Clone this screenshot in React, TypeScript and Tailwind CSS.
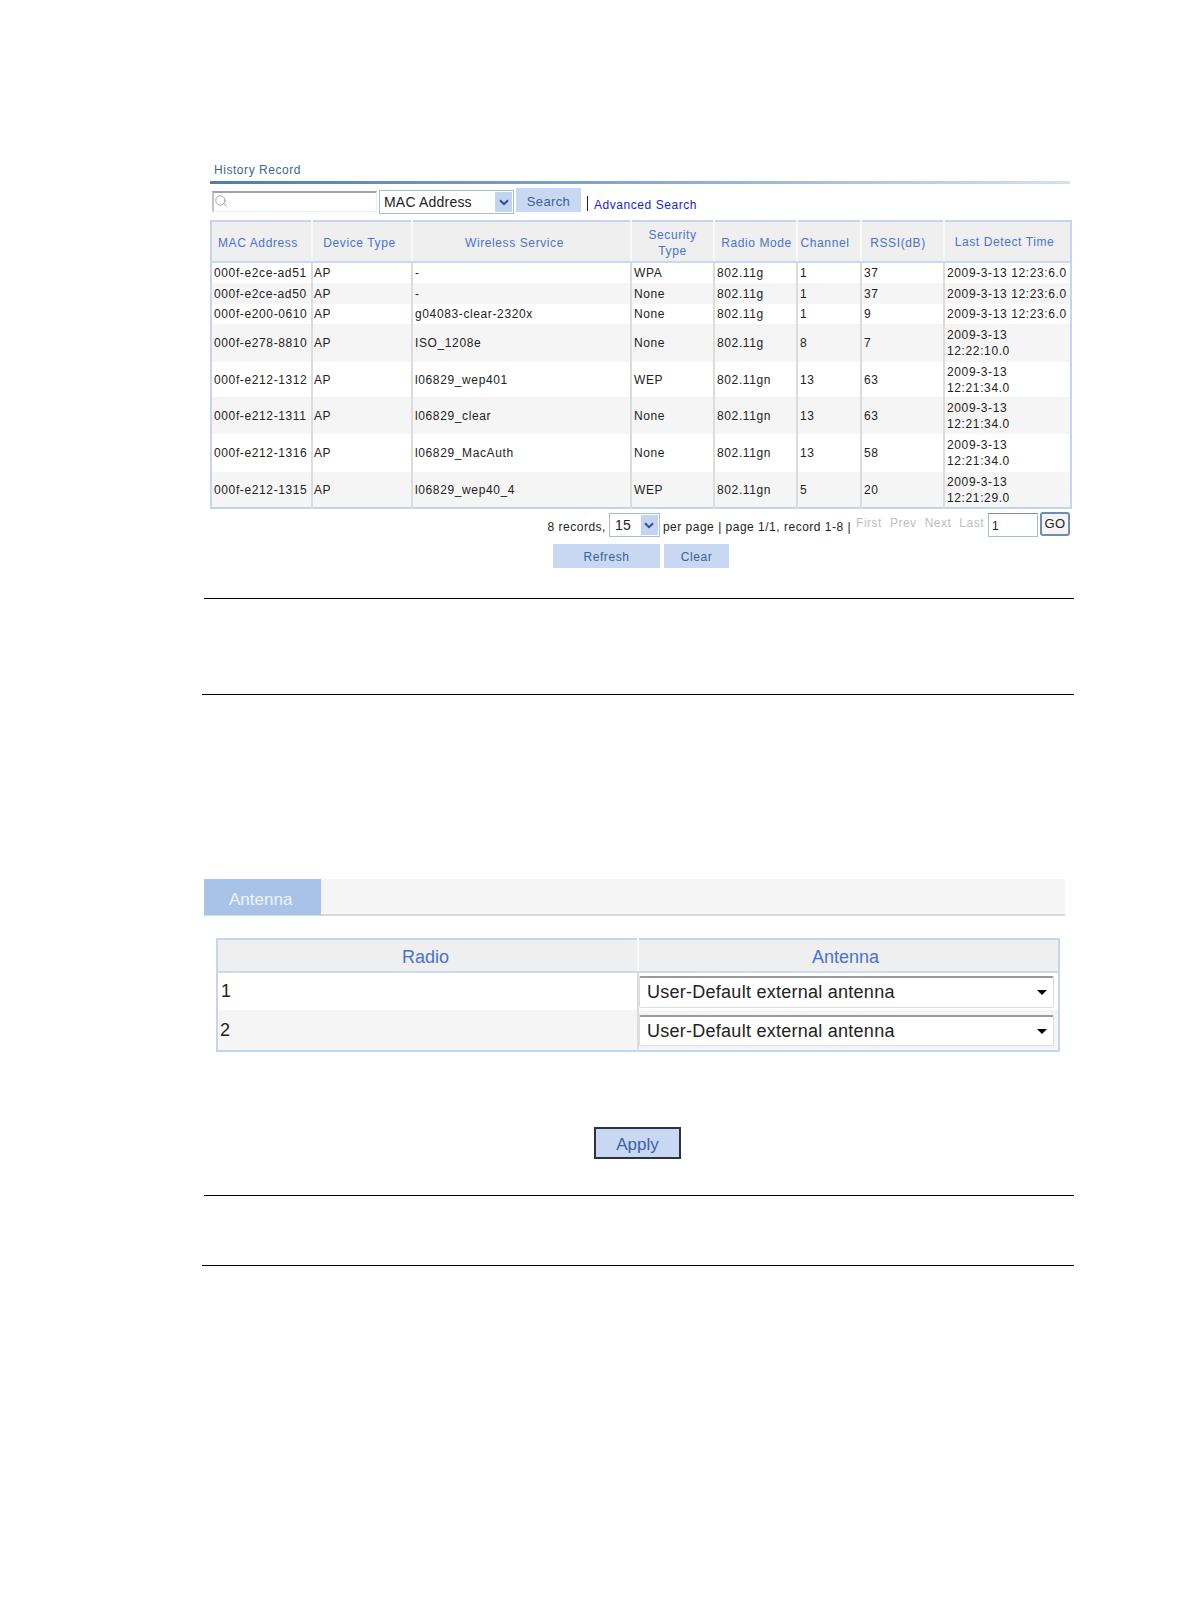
import { Search } from "lucide-react";

const font = "[font-family:'Liberation_Sans',Arial,sans-serif]";

const headers = [
  { label: "MAC Address", cls: "pr-[7px] pt-[2px]" },
  { label: "Device Type", cls: "pr-[5px] pt-[2px]" },
  { label: "Wireless Service", cls: "pr-[14px] pt-[2px]" },
  { label: "Security Type", cls: "pl-0 pt-[2px]" },
  { label: "Radio Mode", cls: "pl-[2px] pt-[2px]" },
  { label: "Channel", cls: "pr-[8px] pt-[2px]" },
  { label: "RSSI(dB)", cls: "pr-[9px] pt-[2px]" },
  { label: "Last Detect Time", cls: "pr-[6px] pt-[1px]" },
];

const rows = [
  { h: "h-[21px]", c: ["000f-e2ce-ad51", "AP", "-", "WPA", "802.11g", "1", "37", "2009-3-13 12:23:6.0"] },
  { h: "h-[21px]", c: ["000f-e2ce-ad50", "AP", "-", "None", "802.11g", "1", "37", "2009-3-13 12:23:6.0"] },
  { h: "h-[20px]", c: ["000f-e200-0610", "AP", "g04083-clear-2320x", "None", "802.11g", "1", "9", "2009-3-13 12:23:6.0"] },
  { h: "h-[38px]", c: ["000f-e278-8810", "AP", "ISO_1208e", "None", "802.11g", "8", "7", "2009-3-13 12:22:10.0"] },
  { h: "h-[35px]", c: ["000f-e212-1312", "AP", "l06829_wep401", "WEP", "802.11gn", "13", "63", "2009-3-13 12:21:34.0"] },
  { h: "h-[37px]", c: ["000f-e212-1311", "AP", "l06829_clear", "None", "802.11gn", "13", "63", "2009-3-13 12:21:34.0"] },
  { h: "h-[38px]", c: ["000f-e212-1316", "AP", "l06829_MacAuth", "None", "802.11gn", "13", "58", "2009-3-13 12:21:34.0"] },
  { h: "h-[36px]", c: ["000f-e212-1315", "AP", "l06829_wep40_4", "WEP", "802.11gn", "5", "20", "2009-3-13 12:21:29.0"] },
];

const widths = ["w-[101px]", "w-[100px]", "w-[219px]", "w-[83px]", "w-[83px]", "w-[64px]", "w-[83px]", "w-[127px]"];

function Chevron() {
  return (
    <svg width="10" height="7" viewBox="0 0 10 7" aria-hidden="true">
      <path d="M1 1.2 5 5.2 9 1.2" fill="none" stroke="#31508f" strokeWidth="2" />
    </svg>
  );
}

function MiniSelect({ text, cls, pl }: { text: string; cls: string; pl: string }) {
  return (
    <div className={`${cls} h-[24px] border border-[#a9bcd6] bg-white flex items-stretch justify-between p-[1px]`}>
      <span className={`${pl} text-[14px] leading-[20px] tracking-[0.2px] text-[#222]`}>{text}</span>
      <span className="w-[17px] bg-[#c3d4f2] flex items-center justify-center">
        <Chevron />
      </span>
    </div>
  );
}

function AntennaSelect({ cls }: { cls: string }) {
  return (
    <div className={`${cls} w-[415px] border border-[#dedede] border-t-2 border-t-[#9a9a9a] rounded-[2px] bg-white flex items-center justify-between pl-[7px] pr-[6px]`}>
      <span className="text-[18px] tracking-[0.26px] text-[#222]">User-Default external antenna</span>
      <span className="w-0 h-0 border-x-[5px] border-x-transparent border-t-[5px] border-t-black" />
    </div>
  );
}

function Rule({ cls }: { cls: string }) {
  return <div className={`${cls} h-px bg-black`} />;
}

export default function App() {
  return (
    <div className={`${font} w-[1190px] h-[1616px] bg-white pt-[162px] overflow-hidden`}>
      <div className="ml-[210px] w-[860px]">
        <h2 className="h-[18px] pl-[4px] text-[12px] leading-[16px] tracking-[0.55px] font-normal text-[#3f6593]">History Record</h2>
        <div className="mt-[1px] h-[3px] bg-gradient-to-r from-[#4f7fa8] via-[#88a8cf] to-[#d5e1ee]" />

        <div className="mt-[4px] h-[26px] flex items-start">
          <div className="ml-[2px] mt-[3px] w-[165px] h-[21px] border-t-2 border-l-2 border-t-[#a3a3a3] border-l-[#c2c2c2] border-r border-b border-r-[#eee] border-b-[#eee] flex items-center">
            <Search size={14} strokeWidth={1.5} className="text-[#9a9a9a] -mt-[2px]" />
          </div>
          <MiniSelect text="MAC Address" cls="ml-[2px] mt-[2px] w-[135px]" pl="pl-[3px]" />
          <button className="ml-[2px] w-[65px] h-[24px] pt-[3px] bg-[#c9d8f2] text-[13px] tracking-[0.35px] text-[#3d5f9c]">Search</button>
          <span className="ml-[6px] mt-[8px] h-[15px] w-px bg-[#222]" />
          <a className="ml-[6px] mt-[9px] text-[12px] leading-[16px] tracking-[0.55px] text-[#1c1ccc]">Advanced Search</a>
        </div>

        <table className="mt-[6px] w-[860px] table-fixed border-collapse border-2 border-[#c4d6ec]">
          <colgroup>
            {widths.map((w) => (
              <col key={w} className={w} />
            ))}
          </colgroup>
          <thead>
            <tr className="h-[41px] bg-[#efefef]">
              {headers.map((h) => (
                <th
                  key={h.label}
                  className={`${h.cls} border-b-2 border-b-[#c9d9ee] border-r-2 border-r-[#f9f9f9] last:border-r-0 text-center font-normal text-[12px] leading-[16px] tracking-[0.6px] text-[#4a72cf]`}
                >
                  {h.label === "Security Type" ? (
                    <>
                      Security
                      <br />
                      Type
                    </>
                  ) : (
                    h.label
                  )}
                </th>
              ))}
            </tr>
          </thead>
          <tbody>
            {rows.map((r, i) => (
              <tr key={r.c[0]} className={`${r.h} ${i % 2 === 1 ? "bg-[#f5f5f5]" : "bg-white"}`}>
                {r.c.map((t, j) => (
                  <td
                    key={j}
                    className={`${j === 1 ? "pl-[1px]" : "pl-[2px]"} ${j === 7 ? "" : "border-r-2 border-r-[#dcdcdc]"} align-middle text-[12px] leading-[16px] tracking-[0.62px] text-[#222]`}
                  >
                    {t}
                  </td>
                ))}
              </tr>
            ))}
          </tbody>
        </table>

        <div className="mt-[3px] h-[25px] flex items-start justify-end text-[12px] tracking-[0.5px] text-[#222]">
          <span className="mt-[8px] leading-[14px]">8 records,</span>
          <MiniSelect text="15" cls="ml-[3px] mt-px w-[51px]" pl="pl-[4px]" />
          <span className="ml-[3px] mt-[8px] leading-[14px]">per page | page 1/1, record 1-8 |</span>
          <div className="ml-[5px] mt-[4px] flex gap-[8px] leading-[14px] text-[#bdbdbd]">
            <span>First</span>
            <span>Prev</span>
            <span>Next</span>
            <span>Last</span>
          </div>
          <div className="ml-[4px] mt-px w-[50px] h-[24px] border border-[#a9bcd6] border-t-[#8c8c8c] pl-[3px] pt-[4px] leading-[16px]">1</div>
          <button className="ml-[2px] w-[30px] h-[24px] border-2 border-[#6f8db0] rounded-[3px] bg-[#f4f4f4] text-[13px] leading-[16px] text-[#222]">GO</button>
        </div>

        <div className="mt-[7px] flex justify-center gap-[4px] mr-[2px] ml-[4px]">
          <button className="w-[107px] h-[24px] pt-[2px] bg-[#c9d8f2] text-[12px] tracking-[0.6px] text-[#3d5f9c]">Refresh</button>
          <button className="w-[65px] h-[24px] pt-[2px] bg-[#c9d8f2] text-[12px] tracking-[0.6px] text-[#3d5f9c]">Clear</button>
        </div>
      </div>

      <Rule cls="mt-[30px] ml-[204px] w-[870px]" />
      <Rule cls="mt-[95px] ml-[202px] w-[872px]" />

      <div className="mt-[184px] ml-[204px] w-[861px] h-[37px] bg-[#f5f5f5] border-b-2 border-b-[#d8d8d8] flex">
        <div className="w-[117px] h-[36px] bg-[#a9c3e8] pl-[25px] text-[17px] leading-[42px] text-[#eef3fa]">Antenna</div>
      </div>

      <table className="mt-[22px] ml-[216px] w-[842px] table-fixed border-collapse border-2 border-[#c4d6ec] text-[18px]">
        <colgroup>
          <col className="w-[421px]" />
          <col className="w-[421px]" />
        </colgroup>
        <thead>
          <tr className="h-[33px] bg-[#efefef]">
            <th className="pt-[4px] pr-[4px] leading-[25px] border-b-2 border-b-[#c9d9ee] border-r-2 border-r-[#f9f9f9] font-normal text-[#4a72cf]">Radio</th>
            <th className="pt-[4px] pr-[6px] leading-[25px] border-b-2 border-b-[#c9d9ee] font-normal text-[#4a72cf]">Antenna</th>
          </tr>
        </thead>
        <tbody>
          <tr className="h-[38px] bg-white">
            <td className="pl-[3px] border-r-2 border-r-[#dcdcdc] text-[#222]">1</td>
            <td className="p-0 pt-[1px] align-middle">
              <AntennaSelect cls="h-[32px]" />
            </td>
          </tr>
          <tr className="h-[41px] bg-[#f5f5f5]">
            <td className="pl-[2px] border-r-2 border-r-[#dcdcdc] text-[#222]">2</td>
            <td className="p-0 pt-[1px] align-middle">
              <AntennaSelect cls="h-[31px]" />
            </td>
          </tr>
        </tbody>
      </table>

      <button className="block mt-[75px] ml-[594px] w-[87px] h-[32px] pt-[2px] border-2 border-[#2b3442] bg-[#c9d8f2] text-[17px] leading-[28px] text-[#3f5fa8]">Apply</button>

      <Rule cls="mt-[36px] ml-[204px] w-[870px]" />
      <Rule cls="mt-[69px] ml-[202px] w-[872px]" />
    </div>
  );
}
